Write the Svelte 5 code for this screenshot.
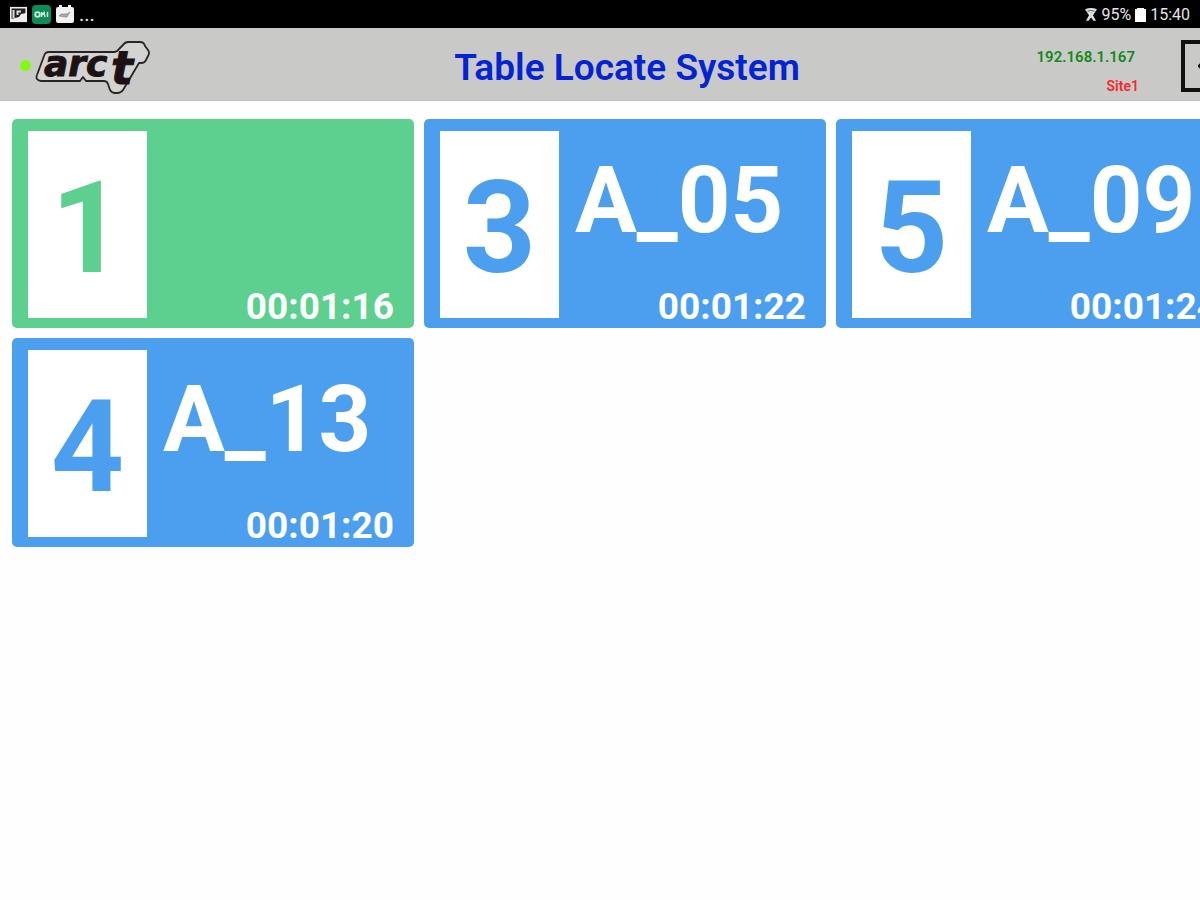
<script>
  const tables = [
    { id: 1, name: '', time: '00:01:16', free: true },
    { id: 3, name: 'A_05', time: '00:01:22', free: false },
    { id: 5, name: 'A_09', time: '00:01:24', free: false },
    { id: 4, name: 'A_13', time: '00:01:20', free: false }
  ];
</script>

<div class="screen">
  <div class="status">
    <div class="group">
      <svg width="17" height="17" viewBox="0 0 17 17" aria-hidden="true">
        <rect x=".8" y="1.700" width="15.400" height="13.600" fill="#202020" stroke="#eee" stroke-width="1.600" />
        <path d="M2.500 4h2v8h-2zM6.500 4.500H11v2H8.500V9h-2z" fill="#ddd" />
        <path d="M1 15v-2l4-1 4-1 2-3 5-1v8z" fill="#eee" />
      </svg>
      <svg width="19" height="19" viewBox="0 0 19 19" aria-hidden="true">
        <rect width="19" height="19" rx="4" fill="#0e8b57" />
        <circle cx="5.500" cy="9.500" r="2.300" fill="none" stroke="#c8ead8" stroke-width="1.800" />
        <path d="M9.500 7v5M9.500 10.500L12 7.500l1 4.500M15.500 7v5" fill="none" stroke="#c8ead8" stroke-width="1.500" />
      </svg>
      <svg width="18" height="19" viewBox="0 0 18 19" aria-hidden="true">
        <path d="M2 2h1V0h3v2h6V0h3v2h1q2 0 2 2v12q0 2-2 2H2q-2 0-2-2V4q0-2 2-2z" fill="#f2f2f2" />
        <path d="M3 11l2-2h6l3-2-3 5H9z" fill="#aaa" stroke="#888" stroke-width=".7" />
      </svg>
      <span class="more">...</span>
    </div>
    <div class="group right">
      <svg width="12" height="14" viewBox="0 0 12 14" aria-hidden="true">
        <path d="M0 1.200Q6-1 12 1.200L8 7.200l3 5.600H8.500L6 9.500 3.500 12.800H1l3-5.600z" fill="#ddd" />
        <path d="M2.500 3.200Q6 1.800 9.500 3.200" fill="none" stroke="#444" stroke-width=".8" />
      </svg>
      <span>95%</span>
      <svg width="11" height="14" viewBox="0 0 11 14" aria-hidden="true">
        <path d="M2 0h7v1h2v13H0V1h2z" fill="#fff" />
      </svg>
      <span>15:40</span>
    </div>
  </div>

  <div class="wide">
    <header>
      <div class="brand">
        <span class="online"></span>
        <svg width="116" height="56" viewBox="0 0 116 56" role="img" aria-label="arct">
          <path
            d="M2 37L9 18q1-4 5-4H79q3 0 5-3l4-4q2-3 5-3h12q4 0 5 4l3 4q2 3 0 6l-2 4q-1 3-5 3h-2L88 52q-2 3-6 3h-2q-3 0-5-3l-2-6q-1-3-4-3H51l-3-4-3 4H6q-6-1-4-6z"
            fill="#d3d3d1"
            stroke="#2a2425"
            stroke-width="1.800"
            stroke-linejoin="round"
          />
          <text class="mark" x="9" y="38" font-size="36">arc</text>
          <text class="mark" x="76" y="46" font-size="46">t</text>
        </svg>
      </div>
      <h1>Table Locate System</h1>
      <div class="side">
        <div class="info">
          <span class="ip">192.168.1.167</span>
          <span class="site">Site1</span>
        </div>
        <button type="button" aria-label="Back">
          <svg width="20" height="24" viewBox="0 0 20 24" aria-hidden="true">
            <path d="M9 5l-7 7 7 7M3 12h16" fill="none" stroke="#111" stroke-width="4" />
          </svg>
        </button>
      </div>
    </header>

    <main>
      {#each tables as table (table.id)}
        <article class:free={table.free}>
          <div class="number">{table.id}</div>
          <div class="detail">
            <div class="name">{table.name}</div>
            <div class="time">{table.time}</div>
          </div>
        </article>
      {/each}
    </main>
  </div>
</div>

<style>
  :global(body) {
    margin: 0;
    background: #fefefe;
  }
  .screen {
    font-family: Roboto, sans-serif;
    overflow-x: hidden;
    min-height: 100vh;
  }
  .status {
    display: flex;
    justify-content: space-between;
    align-items: center;
    height: 28px;
    padding: 0 10px;
    background: #000;
    color: #e4e4e4;
    font-size: 16px;
    line-height: 28px;
  }
  .group {
    display: flex;
    align-items: center;
    gap: 5px;
  }
  .group.right {
    gap: 4px;
    padding-top: 2px;
  }
  .more {
    font-size: 20px;
  }
  .wide {
    width: calc(100% + 50px);
  }
  header {
    display: grid;
    grid-template-columns: 1fr auto 1fr;
    align-items: center;
    height: 73px;
    padding: 3px 16px 0 20px;
    box-sizing: border-box;
    background: #c9c9c7;
    border-bottom: 1px solid #bdbdbb;
  }
  .brand {
    display: flex;
    align-items: center;
    gap: 4px;
  }
  .online {
    width: 11px;
    height: 11px;
    border-radius: 50%;
    background: #84fa14;
  }
  .mark {
    font-family: 'DejaVu Sans', sans-serif;
    font-weight: bold;
    font-style: italic;
    fill: #1c1214;
    stroke: #1c1214;
    stroke-width: 1px;
  }
  h1 {
    margin: 0;
    padding-top: 4px;
    color: #0424d4;
    font-size: 37px;
    font-weight: 600;
    line-height: 44px;
  }
  .side {
    display: flex;
    justify-content: flex-end;
    align-items: center;
    gap: 42px;
  }
  .info {
    display: flex;
    flex-direction: column;
    align-items: flex-end;
    gap: 13px;
    padding-top: 12px;
    font-size: 15px;
    font-weight: 600;
    line-height: 16px;
  }
  .ip {
    padding-right: 4px;
    color: #128a18;
  }
  .site {
    color: #f4282c;
    font-size: 14px;
  }
  button {
    display: flex;
    align-items: center;
    justify-content: center;
    width: 53px;
    height: 52px;
    padding: 0;
    border: 4px solid #111;
    background: transparent;
  }
  main {
    display: grid;
    grid-template-columns: repeat(3, 1fr);
    gap: 10px;
    padding: 18px 12px;
  }
  article {
    --tone: #4b9fee;
    display: flex;
    gap: 16px;
    padding: 12px 20px 10px 16px;
    border-radius: 5px;
    background: var(--tone);
    color: #fff;
    font-weight: 700;
  }
  article.free {
    --tone: #5dd08f;
  }
  .number {
    flex: 0 0 119px;
    padding-top: 8px;
    box-sizing: border-box;
    background: #fff;
    color: var(--tone);
    font-size: 128px;
    line-height: 179px;
    text-align: center;
  }
  .detail {
    flex: 1;
    display: flex;
    flex-direction: column;
    justify-content: space-between;
  }
  .name {
    min-height: 140px;
    font-size: 92px;
    line-height: 140px;
  }
  .time {
    font-size: 37px;
    line-height: 22px;
    text-align: right;
  }
</style>
